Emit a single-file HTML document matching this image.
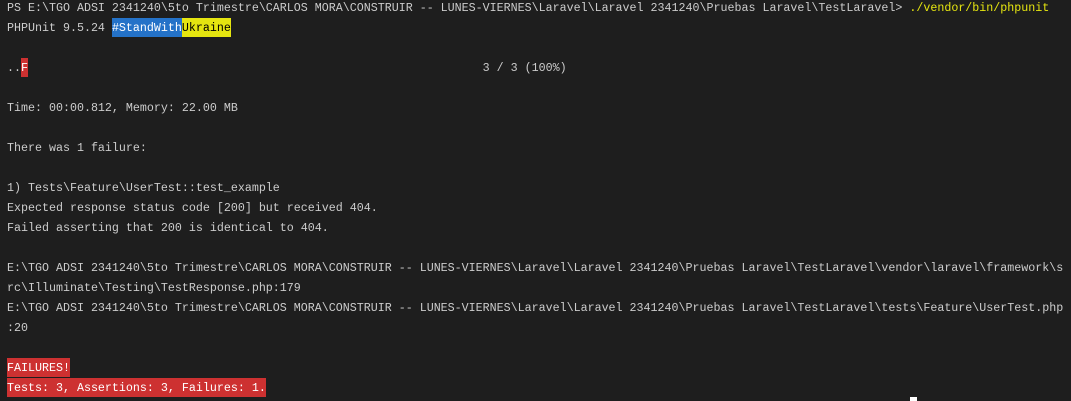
<!DOCTYPE html>
<html><head><meta charset="utf-8"><style>
html,body{margin:0;padding:0;background:#1e1e1e;width:1071px;height:401px;overflow:hidden}
pre{margin:0;position:absolute;left:7px;top:-2px;font-family:"Liberation Mono",monospace;font-size:11.67px;line-height:20px;color:#cccccc;white-space:pre}
.b,.y,.r{display:inline-block;height:19px;line-height:20px;vertical-align:top}
.b{background:#2472c8;color:#fff}
.y{background:#e5e510;color:#000}
.r{background:#cd3131;color:#fff}
.yl{color:#e5e510}
.cur{position:absolute;left:910px;top:397px;width:7px;height:4px;background:#fff}
</style></head><body>
<pre>PS E:\TGO ADSI 2341240\5to Trimestre\CARLOS MORA\CONSTRUIR -- LUNES-VIERNES\Laravel\Laravel 2341240\Pruebas Laravel\TestLaravel&gt; <span class="yl">./vendor/bin/phpunit</span>
PHPUnit 9.5.24 <span class="b">#StandWith</span><span class="y">Ukraine</span>

..<span class="r">F</span>                                                                 3 / 3 (100%)

Time: 00:00.812, Memory: 22.00 MB

There was 1 failure:

1) Tests\Feature\UserTest::test_example
Expected response status code [200] but received 404.
Failed asserting that 200 is identical to 404.

E:\TGO ADSI 2341240\5to Trimestre\CARLOS MORA\CONSTRUIR -- LUNES-VIERNES\Laravel\Laravel 2341240\Pruebas Laravel\TestLaravel\vendor\laravel\framework\s
rc\Illuminate\Testing\TestResponse.php:179
E:\TGO ADSI 2341240\5to Trimestre\CARLOS MORA\CONSTRUIR -- LUNES-VIERNES\Laravel\Laravel 2341240\Pruebas Laravel\TestLaravel\tests\Feature\UserTest.php
:20

<span class="r">FAILURES!</span>
<span class="r">Tests: 3, Assertions: 3, Failures: 1.</span></pre>
<div class="cur"></div>
</body></html>
